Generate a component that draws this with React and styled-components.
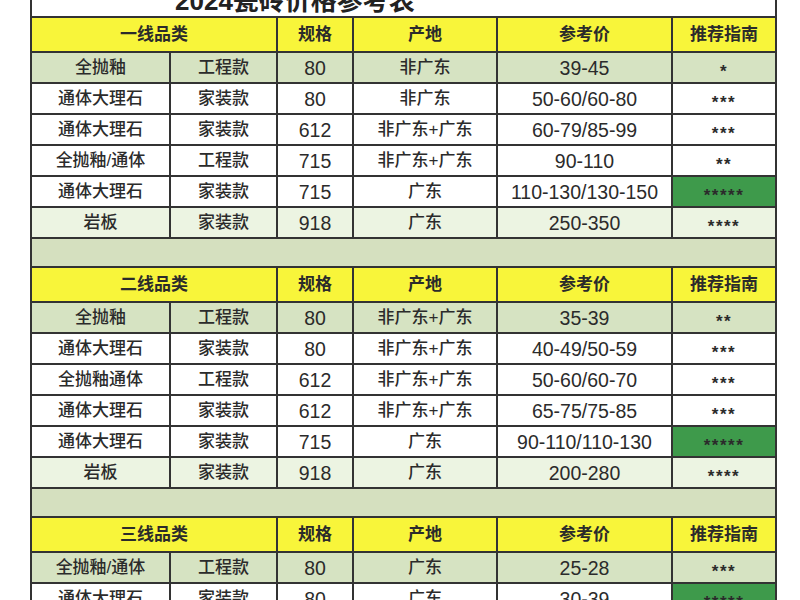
import React from 'react'
import styled, {createGlobalStyle} from 'styled-components'

const GlobalStyle = createGlobalStyle`
    html, body {
        margin: 0;
        padding: 0;
        background: #ffffff;
    }
    body {
        font-family: "Liberation Sans", "Noto Sans CJK SC", sans-serif;
        color: #2b2b2b;
        overflow: hidden;
    }
`

const PAGE = styled.div`
    width: 800px;
    height: 600px;
    overflow: hidden;
    padding-left: 30px;
    box-sizing: border-box;
`

const TABLE = styled.table`
    width: 745px;
    border-collapse: collapse;
    table-layout: fixed;
    margin-top: -22px;
`

const TITLE_CELL = styled.td`
    height: 36px;
    padding: 0 0 0 143px;
    border: 2px solid #333;
    background: #ffffff;
    font-size: 26px;
    font-weight: bold;
    line-height: 30px;
    text-align: left;
    vertical-align: bottom;
    color: #222;
`

const ROW_BG = {
    header: '#f8f53a',
    green: '#d6e3c2',
    pale: '#ecf4e2',
    plain: '#ffffff',
}

const CELL = styled.td`
    height: ${(p) => (p.$head ? 33 : 29)}px;
    padding: 0;
    border: 2px solid #333;
    background: ${(p) => (p.$hot ? '#3e9a4b' : ROW_BG[p.$kind])};
    font-size: 17px;
    font-weight: ${(p) => (p.$head ? 'bold' : 500)};
    line-height: 20px;
    text-align: center;
    vertical-align: middle;
    white-space: nowrap;
`

const NUM = styled.span`
    display: inline-block;
    vertical-align: top;
    font-size: 19.5px;
    font-weight: normal;
    line-height: 20px;
`

const STARS = styled.span`
    display: inline-block;
    vertical-align: top;
    font-size: 17px;
    font-weight: bold;
    letter-spacing: 1.5px;
    line-height: 20px;
    position: relative;
    top: 4px;
`

const SPACER = styled.td`
    height: 27px;
    padding: 0;
    border: 2px solid #333;
    background: #d5e0bf;
`

const COLS = [139, 107, 76, 144, 175, 104]

const SECTIONS = [
    {
        name: '一线品类',
        rows: [
            ['全抛釉', '工程款', '80', '非广东', '39-45', '*', 'green'],
            ['通体大理石', '家装款', '80', '非广东', '50-60/60-80', '***', 'plain'],
            ['通体大理石', '家装款', '612', '非广东+广东', '60-79/85-99', '***', 'plain'],
            ['全抛釉/通体', '工程款', '715', '非广东+广东', '90-110', '**', 'plain'],
            ['通体大理石', '家装款', '715', '广东', '110-130/130-150', '*****', 'plain', true],
            ['岩板', '家装款', '918', '广东', '250-350', '****', 'pale'],
        ],
    },
    {
        name: '二线品类',
        rows: [
            ['全抛釉', '工程款', '80', '非广东+广东', '35-39', '**', 'green'],
            ['通体大理石', '家装款', '80', '非广东+广东', '40-49/50-59', '***', 'plain'],
            ['全抛釉通体', '工程款', '612', '非广东+广东', '50-60/60-70', '***', 'plain'],
            ['通体大理石', '家装款', '612', '非广东+广东', '65-75/75-85', '***', 'plain'],
            ['通体大理石', '家装款', '715', '广东', '90-110/110-130', '*****', 'plain', true],
            ['岩板', '家装款', '918', '广东', '200-280', '****', 'pale'],
        ],
    },
    {
        name: '三线品类',
        rows: [
            ['全抛釉/通体', '工程款', '80', '广东', '25-28', '***', 'green'],
            ['通体大理石', '家装款', '80', '广东', '30-39', '*****', 'plain', true],
        ],
    },
]

function SectionHeader({name}) {
    return (
        <tr>
            <CELL $head $kind="header" colSpan={2}>{name}</CELL>
            <CELL $head $kind="header">规格</CELL>
            <CELL $head $kind="header">产地</CELL>
            <CELL $head $kind="header">参考价</CELL>
            <CELL $head $kind="header">推荐指南</CELL>
        </tr>
    )
}

function PriceRow({row}) {
    const [kind, type, size, origin, price, stars, bg, hot] = row
    return (
        <tr>
            <CELL $kind={bg}>{kind}</CELL>
            <CELL $kind={bg}>{type}</CELL>
            <CELL $kind={bg}><NUM>{size}</NUM></CELL>
            <CELL $kind={bg}>{origin}</CELL>
            <CELL $kind={bg}><NUM>{price}</NUM></CELL>
            <CELL $kind={bg} $hot={hot}><STARS>{stars}</STARS></CELL>
        </tr>
    )
}

export default function App() {
    return (
        <PAGE>
            <GlobalStyle />
            <TABLE>
                <colgroup>
                    {COLS.map((w, i) => <col key={i} style={{width: w}} />)}
                </colgroup>
                <tbody>
                    <tr>
                        <TITLE_CELL colSpan={6}>2024瓷砖价格参考表</TITLE_CELL>
                    </tr>
                    {SECTIONS.map((section, si) => (
                        <React.Fragment key={section.name}>
                            <SectionHeader name={section.name} />
                            {section.rows.map((row, ri) => <PriceRow key={ri} row={row} />)}
                            {si < SECTIONS.length - 1 && (
                                <tr><SPACER colSpan={6} /></tr>
                            )}
                        </React.Fragment>
                    ))}
                </tbody>
            </TABLE>
        </PAGE>
    )
}
